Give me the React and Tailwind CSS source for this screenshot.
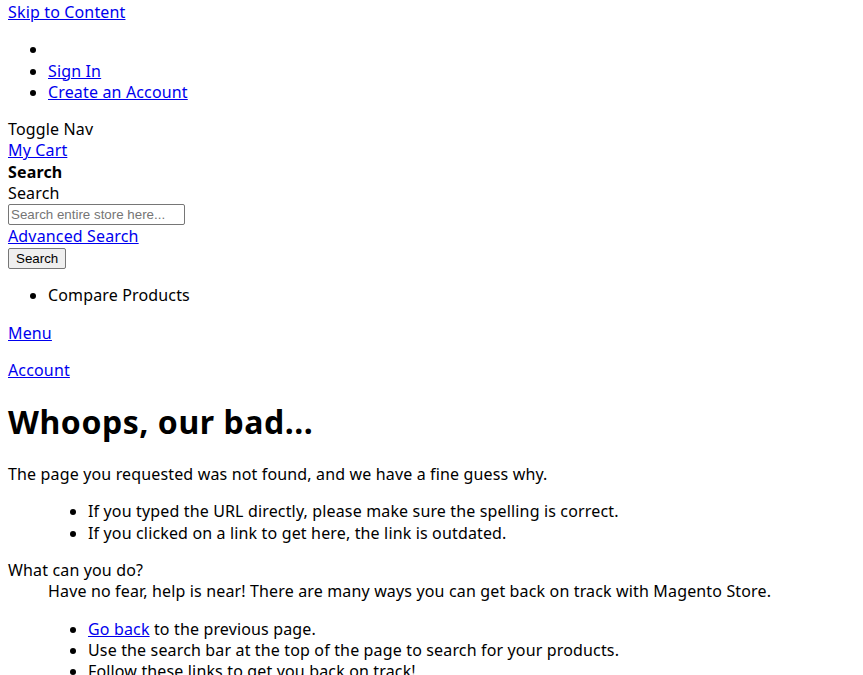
export default function App() {
  const link = "text-[#0000ee] underline";
  return (
    <div className="px-2 pt-[2px] text-[16px] leading-[21.3px] tracking-[0.15px] text-black font-['Noto_Sans',sans-serif]">
      <a href="#" className={link}>Skip to Content</a>

      <ul className="list-disc pl-10 my-4">
        <li>&nbsp;</li>
        <li><a href="#" className={link}>Sign In</a></li>
        <li><a href="#" className={link}>Create an Account</a></li>
      </ul>

      <div>Toggle Nav</div>
      <div><a href="#" className={link}>My Cart</a></div>
      <div className="font-bold">Search</div>
      <div>Search</div>
      <div>
        <input
          type="text"
          placeholder="Search entire store here..."
          className="w-[177px] h-[21px] border border-[#767676] rounded-[2px] px-[2px] text-[13.33px] tracking-normal font-['Liberation_Sans',Arial,sans-serif] placeholder:text-[#757575] align-top"
        />
      </div>
      <div><a href="#" className={link}>Advanced Search</a></div>
      <div className="pt-[1px]">
        <button className="h-[21px] px-[7px] bg-[#efefef] border border-[#767676] rounded-[2px] text-[13.33px] leading-none tracking-normal font-['Liberation_Sans',Arial,sans-serif] align-top">
          Search
        </button>
      </div>

      <ul className="list-disc pl-10 my-4">
        <li>Compare Products</li>
      </ul>

      <p className="my-4"><a href="#" className={link}>Menu</a></p>
      <p className="my-4"><a href="#" className={link}>Account</a></p>

      <h1 className="text-[32px] leading-[42px] tracking-[0.55px] font-bold mt-[20px] mb-[21px]">Whoops, our bad...</h1>

      <dl className="my-[21px]">
        <dt>The page you requested was not found, and we have a fine guess why.</dt>
        <dd className="ml-10">
          <ul className="list-disc pl-10 my-4">
            <li>If you typed the URL directly, please make sure the spelling is correct.</li>
            <li>If you clicked on a link to get here, the link is outdated.</li>
          </ul>
        </dd>
        <dt>What can you do?</dt>
        <dd className="ml-10">Have no fear, help is near! There are many ways you can get back on track with Magento Store.</dd>
        <dd className="ml-10">
          <ul className="list-disc pl-10 my-4">
            <li><a href="#" className={link}>Go back</a> to the previous page.</li>
            <li>Use the search bar at the top of the page to search for your products.</li>
            <li>Follow these links to get you back on track!</li>
          </ul>
        </dd>
      </dl>
    </div>
  );
}
